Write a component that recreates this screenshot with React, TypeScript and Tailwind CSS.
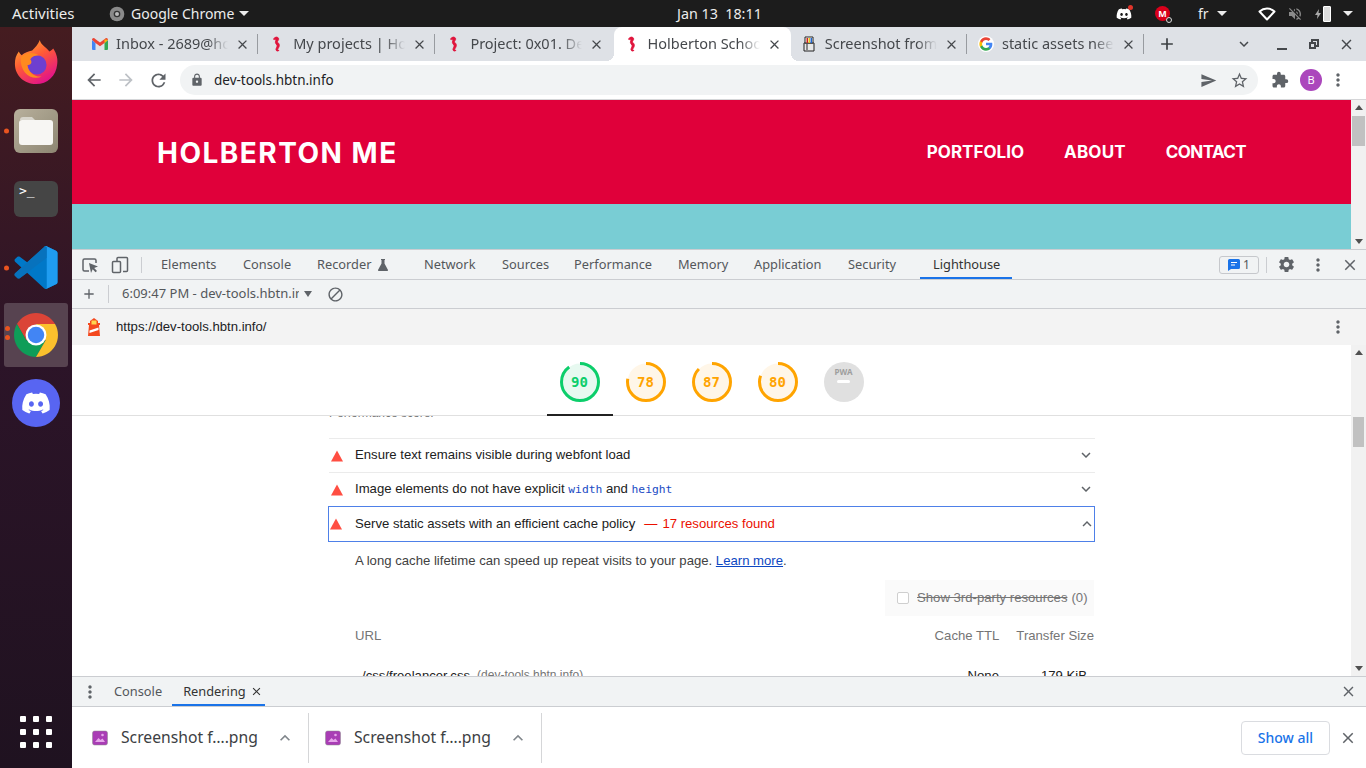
import { FaDiscord } from "react-icons/fa";
import {
  MdAdd,
  MdArrowBack,
  MdArrowForward,
  MdBlock,
  MdClose,
  MdExpandLess,
  MdExpandMore,
  MdExtension,
  MdLock,
  MdMoreVert,
  MdRefresh,
  MdSend,
  MdSettings,
  MdStarBorder,
  MdVolumeOff,
} from "react-icons/md";

function Seahorse() {
  return (
    <svg viewBox="0 0 16 16" className="h-4 w-4">
      <path
        d="M6 1.500c2-1 4 0 3.600 2-.2 1-1.200 1.400-1.200 2.300 0 .9 1.900 1.400 1.900 3.400 0 2.200-1.500 3.300-1.700 4.400-.1.800.9 1 1.400.4-.1 1.300-2.600 1.500-3-.1-.3-1.400 1.200-2.500 1.100-4.300-.1-1.200-1.600-1.700-1.700-3.200-.1-1 .6-1.700.6-2.500 0-.5-.6-.6-1.300-.3L4.400 3.100z"
        fill="#e0143c"
        stroke="#e0143c"
        strokeWidth="0.9"
      />
    </svg>
  );
}

function GmailIcon() {
  return (
    <svg viewBox="0 0 16 12" className="h-3 w-4">
      <path d="M0 2v9a1 1 0 0 0 1 1h2.500V5z" fill="#4285f4" />
      <path d="M16 2v9a1 1 0 0 1-1 1h-2.500V5z" fill="#34a853" />
      <path d="M0 1.800C0 .4 1.500-.4 2.600.4L8 4.500 13.400.4C14.500-.4 16 .4 16 1.800L12.500 5 8 8.300 3.500 5z" fill="#ea4335" />
      <path d="M12.500 1.500 16 1.800 12.500 5z" fill="#fbbc04" />
    </svg>
  );
}

function GoogleIcon() {
  return (
    <svg viewBox="0 0 48 48" className="h-4 w-4">
      <circle cx="24" cy="24" r="24" fill="#fff" />
      <path d="M43 24.500c0-1.400-.1-2.700-.4-4H24v7.600h10.700c-.5 2.500-1.900 4.500-4 5.900v5h6.400c3.700-3.500 5.900-8.600 5.900-14.500z" fill="#4285f4" />
      <path d="M24 44c5.400 0 9.900-1.800 13.100-4.900l-6.400-5c-1.800 1.200-4 1.900-6.700 1.900-5.200 0-9.600-3.500-11.200-8.200H6.200v5.100C9.500 39.500 16.200 44 24 44z" fill="#34a853" />
      <path d="M12.800 27.800c-.8-2.400-.8-5.100 0-7.600v-5.100H6.200c-2.800 5.500-2.800 12.300 0 17.800z" fill="#fbbc04" />
      <path d="M24 12c2.900 0 5.500 1 7.600 3l5.600-5.600C33.900 6.200 29.400 4 24 4 16.200 4 9.500 8.500 6.200 15.100l6.600 5.100C14.400 15.500 18.800 12 24 12z" fill="#ea4335" />
    </svg>
  );
}

function PaintIcon() {
  return (
    <svg viewBox="0 0 16 16" className="h-4 w-4">
      <path d="M3 7h10v8H3z" fill="#e8e8e8" stroke="#222" />
      <path d="M4 1h8v6H4z" fill="#fff" stroke="#222" />
      <path d="M5.500 2h1.500v5H5.500z" fill="#c22" />
      <path d="M7.500 2H9v5H7.500z" fill="#e5c31c" />
      <path d="M9.500 2H11v5H9.500z" fill="#26c" />
      <path d="M5 8h2v6H5z" fill="#888" />
    </svg>
  );
}

function Tab({
  icon,
  title,
  active,
  sep,
}: {
  icon: React.ReactNode;
  title: string;
  active?: boolean;
  sep?: boolean;
}) {
  return (
    <div
      className={
        active
          ? "relative flex h-[34px] w-[177.2px] items-center rounded-t-lg bg-white pl-[10px] before:absolute before:bottom-0 before:-left-2 before:h-2 before:w-2 before:bg-[radial-gradient(circle_at_0_0,transparent_8px,white_8px)] after:absolute after:-right-2 after:bottom-0 after:h-2 after:w-2 after:bg-[radial-gradient(circle_at_100%_0,transparent_8px,white_8px)]"
          : "relative flex h-[34px] w-[177.2px] items-center pl-[10px]"
      }
    >
      <span className="flex h-4 w-4 shrink-0 items-center justify-center">{icon}</span>
      <span className="ml-2 w-[112px] overflow-hidden whitespace-nowrap text-[14.500px] text-[#45484c] [mask-image:linear-gradient(to_right,black_82%,transparent)]">
        {title}
      </span>
      <MdClose className="ml-[7px] h-[15px] w-[15px] shrink-0 text-[#45484c]" />
      {sep && <span className="absolute top-[7px] right-[1px] h-5 w-px bg-[#989ba0]" />}
    </div>
  );
}

function Scrollbar({ thumb }: { thumb: string }) {
  return (
    <div className="flex w-[15px] shrink-0 flex-col items-center bg-[#f1f1f1]">
      <span className="mt-[5px] h-0 w-0 border-x-[4px] border-b-[5px] border-x-transparent border-b-[#505050]" />
      <span className={`h-[30px] bg-[#c1c1c1] ${thumb}`} />
      <span className="mt-auto mb-[5px] h-0 w-0 border-x-[4px] border-t-[5px] border-x-transparent border-t-[#505050]" />
    </div>
  );
}

function Gauge({ score, color, bg, dash }: { score: string; color: string; bg: string; dash: string }) {
  return (
    <div className="relative h-10 w-10">
      <svg viewBox="0 0 40 40" className="h-10 w-10 -rotate-90">
        <circle cx="20" cy="20" r="18.500" fill={bg} />
        <circle cx="20" cy="20" r="18.500" fill="none" stroke={color} strokeWidth="3" strokeDasharray={dash} />
      </svg>
      <span
        className="absolute inset-0 flex items-center justify-center font-['DejaVu_Sans_Mono',monospace] text-[14px] font-bold"
        style={{ color }}
      >
        {score}
      </span>
    </div>
  );
}

function Warn() {
  return (
    <svg viewBox="0 0 12 12" className="h-3 w-3 shrink-0">
      <path d="M6 .500 12 11.500H0z" fill="#ff4e42" />
    </svg>
  );
}

function AuditRow({ children }: { children: React.ReactNode }) {
  return (
    <div className="-mr-[1px] flex h-[34px] items-center border-t border-[#ebebeb] pl-[2px]">
      <Warn />
      <span className="ml-3 flex-1 pb-[2px]">{children}</span>
      <MdExpandMore className="-mt-[1px] h-[18px] w-[18px] text-[#5f6368]" />
    </div>
  );
}

function ShotIcon() {
  return (
    <svg viewBox="0 0 16 16" className="h-4 w-4 shrink-0">
      <rect x="0.500" y="1" width="15" height="14" rx="2" fill="#a93db5" stroke="#8b8b8b" strokeWidth="0.500" />
      <path d="M3 12l3.500-4 2 2 2-1.500L13 12z" fill="#e6a8ea" />
      <circle cx="10.500" cy="5" r="1.300" fill="#e6a8ea" />
    </svg>
  );
}

const devTabs = [
  { name: "Elements", w: "w-[82px]" },
  { name: "Console", w: "w-[74px]" },
  { name: "Recorder", w: "w-[107px]", flask: true },
  { name: "Network", w: "w-[78px]" },
  { name: "Sources", w: "w-[72px]" },
  { name: "Performance", w: "w-[104px]" },
  { name: "Memory", w: "w-[76px]" },
  { name: "Application", w: "w-[94px]" },
  { name: "Security", w: "w-[85px]" },
];

export default function App() {
  return (
    <div className="flex h-[768px] w-[1366px] flex-col overflow-hidden bg-white font-['Noto_Sans',sans-serif]">
      {/* gnome top bar */}
      <header className="flex h-[27px] shrink-0 items-center bg-[#1c1c1c] text-[14px] text-[#ececec]">
        <span className="ml-3 w-[97px] text-[15px]">Activities</span>
        <svg viewBox="0 0 48 48" className="h-4 w-4">
          <circle cx="24" cy="24" r="22" fill="#8a8a8a" />
          <circle cx="24" cy="24" r="10" fill="#333" />
          <circle cx="24" cy="24" r="6" fill="#bbb" />
        </svg>
        <span className="ml-[6px] w-[108px]">Google Chrome</span>
        <span className="h-0 w-0 border-x-[5px] border-t-[5px] border-x-transparent border-t-[#ececec]" />
        <span className="ml-[428px] w-[86px] whitespace-pre text-[14.300px]">Jan 13  18:11</span>
        <span className="relative ml-[353px] h-4 w-4">
          <FaDiscord className="h-4 w-4 text-white" />
          <span className="absolute -top-[1px] -right-[1px] h-[5px] w-[5px] rounded-full bg-[#e0352b]" />
        </span>
        <span className="relative ml-[23px] flex h-[15px] w-[15px] items-center justify-center rounded-full bg-[#d9001b] text-[9px] font-bold text-white">
          M
          <span className="absolute -right-[2px] -bottom-[2px] h-[6px] w-[6px] rounded-full border border-[#ddd] bg-[#222]" />
        </span>
        <span className="ml-[28px]">fr</span>
        <span className="ml-2 h-0 w-0 border-x-[5px] border-t-[5px] border-x-transparent border-t-[#ececec]" />
        <svg viewBox="0 0 18 14" className="ml-[31px] h-[14px] w-[18px]" fill="none" stroke="#fff" strokeWidth="2">
          <path d="M1.500 4.500C6 .5 12 .5 16.500 4.500L9 12.500z" strokeLinejoin="round" />
        </svg>
        <MdVolumeOff className="ml-[11px] h-4 w-4 text-[#8a8a8a]" />
        <svg viewBox="0 0 6 10" className="ml-[12px] h-[10px] w-[6px]">
          <path d="M4 0 0 6h2.500L2 10l4-6H3.500z" fill="#aaa" />
        </svg>
        <span className="ml-[2px] h-[16px] w-[8px] rounded-[1px] border border-white bg-[#ddd]" />
        <span className="ml-[12px] h-0 w-0 border-x-[5px] border-t-[5px] border-x-transparent border-t-[#ececec]" />
      </header>

      <div className="flex min-h-0 flex-1">
        {/* dock */}
        <aside className="flex w-[72px] shrink-0 flex-col items-center bg-[linear-gradient(#451c20,#2c1428_45%,#1f1220)]">
          <svg viewBox="0 0 48 48" className="mt-[12px] h-[46px] w-[46px]">
            <defs>
              <linearGradient id="fx" x1="0" y1="0" x2="0.6" y2="1">
                <stop offset="0" stopColor="#ffbd30" />
                <stop offset="0.5" stopColor="#ff5a36" />
                <stop offset="1" stopColor="#e31587" />
              </linearGradient>
            </defs>
            <path d="M28 1c1 5 6 7 10 12 2-1 3-2 4-3 4 6 5 12 4 17-1 11-10 20-22 20S2 38 2 26c0-5 1-9 4-13 1 2 2 3 3 4 3-3 7-4 11-5 3-3 6-6 8-11z" fill="url(#fx)" />
            <circle cx="25" cy="27" r="10" fill="#6e3fd0" />
            <path d="M8 19c5-5 12-6 19-2 -3 0-7 1-9 4 3 4 0 6-3 6 1 8 8 13 15 12-10 5-23-3-22-20z" fill="#ff8a1f" />
          </svg>
          <div className="relative mt-[24px] flex h-[44px] w-[44px] items-center justify-center rounded-md bg-[linear-gradient(135deg,#b8b09c,#8d8672)]">
            <span className="absolute top-1/2 -left-[10px] h-[5px] w-[5px] -translate-y-1/2 rounded-full bg-[#e95420]" />
            <svg viewBox="0 0 36 30" className="h-[30px] w-[36px]">
              <path d="M2 4a3 3 0 0 1 3-3h9l3 3z" fill="#d8d5cc" />
              <rect x="1" y="4" width="34" height="25" rx="3" fill="#f7f6f3" />
            </svg>
          </div>
          <div className="mt-[28px] flex h-[36px] w-[44px] items-start rounded-md bg-[#454545] pl-[5px] pt-[3px] font-['DejaVu_Sans_Mono',monospace] text-[13px] leading-[14px] text-white">
            &gt;_
          </div>
          <div className="relative mt-[29px] h-[43px] w-[44px]">
            <span className="absolute top-1/2 -left-[10px] h-[5px] w-[5px] -translate-y-1/2 rounded-full bg-[#e95420]" />
            <svg viewBox="0 0 100 100" className="h-[43px] w-[44px]">
              <path
                d="M70.900 99.300c1.600.6 3.400.6 5-.2l20.600-9.900c2.200-1 3.500-3.200 3.500-5.600V16.400c0-2.400-1.400-4.600-3.500-5.600L75.900.9c-2.100-1-4.600-.8-6.400.5-.3.2-.5.400-.7.700L29.400 38 12.200 25c-1.600-1.200-3.800-1.100-5.300.2l-5.500 5c-1.800 1.700-1.800 4.500 0 6.200L16.200 50 1.400 63.600c-1.800 1.700-1.800 4.500 0 6.200l5.500 5c1.500 1.300 3.700 1.400 5.300.2L29.400 62l39.400 36c.6.600 1.300 1 2.100 1.300zM75 27.300 45.100 50 75 72.700z"
                fill="#0078c8"
              />
              <path d="M75.900.9l20.600 9.900c2.200 1 3.500 3.200 3.500 5.600v67.200c0 2.400-1.400 4.600-3.500 5.600L75.900 99.100c-2.100 1-4.600.8-6.400-.5 2.300 2.300 5.500.6 5.500-2.600V4c0-3.200-3.200-4.900-5.500-2.600 1.800-1.300 4.300-1.500 6.400-.5z" fill="#1f9cf0" />
              <path d="M75 4v23.300L29.400 62 12.200 75c-1.600 1.200-3.800 1.100-5.300-.2l-5.500-5c-1.800-1.700-1.800-4.500 0-6.200L68.800 2.100C70.900 0 75 1 75 4z" fill="#0a6fb8" opacity="0.7" />
            </svg>
          </div>
          <div className="relative mt-[14px] flex h-[64px] w-[64px] items-center justify-center rounded-[3px] bg-[#574350]">
            <span className="absolute top-[23px] left-[1px] h-[5px] w-[5px] rounded-full bg-[#e95420]" />
            <span className="absolute top-[32px] left-[1px] h-[5px] w-[5px] rounded-full bg-[#e95420]" />
            <svg viewBox="4 4 40 40" className="h-[44px] w-[44px]">
              <path d="M6.700 14A20 20 0 0 1 41.300 14H24L15.300 29z" fill="#db4437" />
              <path d="M6.700 14A20 20 0 0 0 24 44L32.700 29H15.300z" fill="#0f9d58" />
              <path d="M41.300 14A20 20 0 0 1 24 44L32.700 29 24 14z" fill="#fbc02d" />
              <circle cx="24" cy="24" r="9.500" fill="#fff" />
              <circle cx="24" cy="24" r="7.500" fill="#4285f4" />
            </svg>
          </div>
          <div className="mt-[12px] flex h-12 w-12 items-center justify-center rounded-full bg-[#5865f2]">
            <FaDiscord className="h-[30px] w-[30px] text-white" />
          </div>
          <div className="mt-auto mb-[20px] grid grid-cols-3 gap-x-[7px] gap-y-[7px]">
            {Array.from({ length: 9 }).map((_, i) => (
              <span key={i} className="h-[6px] w-[6px] rounded-[1px] bg-white" />
            ))}
          </div>
        </aside>

        <main className="flex min-w-0 flex-1 flex-col">
          {/* tab strip */}
          <div className="flex h-[34px] shrink-0 items-center bg-[#dee1e6] pl-[10px]">
            <Tab icon={<GmailIcon />} title="Inbox - 2689@holbertonschool" sep />
            <Tab icon={<Seahorse />} title="My projects | Holberton" sep />
            <Tab icon={<Seahorse />} title="Project: 0x01. DevTools" />
            <Tab icon={<Seahorse />} title="Holberton School" active />
            <Tab icon={<PaintIcon />} title="Screenshot from 2022" sep />
            <Tab icon={<GoogleIcon />} title="static assets need" sep />
            <MdAdd className="ml-[12px] h-[20px] w-[20px] text-[#3c4043]" />
            <MdExpandMore className="ml-[58px] h-[18px] w-[18px] text-[#45484c]" />
            <span className="mt-[10px] ml-[24px] h-[2px] w-[10px] bg-[#45484c]" />
            <span className="relative ml-[22px] h-[10px] w-[10px]">
              <span className="absolute top-0 right-0 h-[8px] w-[8px] border-2 border-[#45484c]" />
              <span className="absolute bottom-0 left-0 h-[7px] w-[7px] border-2 border-[#45484c] bg-[#dee1e6]" />
            </span>
            <MdClose className="ml-[19px] h-[17px] w-[17px] text-[#45484c]" />
          </div>

          {/* toolbar */}
          <div className="flex h-[39px] shrink-0 items-center border-b border-[#d5d6d8] bg-white">
            <MdArrowBack className="ml-[12px] h-5 w-5 text-[#5f6368]" />
            <MdArrowForward className="ml-[12px] h-5 w-5 text-[#bdc1c6]" />
            <MdRefresh className="ml-[12px] h-[21px] w-[21px] text-[#5f6368]" />
            <div className="ml-[11px] flex h-[30px] w-[1078px] items-center rounded-full bg-[#f1f3f4]">
              <MdLock className="ml-[10px] h-[14px] w-[14px] text-[#5f6368]" />
              <span className="ml-[10px] text-[13.500px] text-[#202124]">dev-tools.hbtn.info</span>
              <MdSend className="ml-auto h-[17px] w-[17px] text-[#5f6368]" />
              <MdStarBorder className="mr-[9px] ml-[13px] h-[19px] w-[19px] text-[#5f6368]" />
            </div>
            <MdExtension className="ml-[13px] h-[18px] w-[18px] text-[#5f6368]" />
            <span className="ml-[11px] flex h-[22px] w-[22px] items-center justify-center rounded-full bg-[#ab47bc] text-[11px] text-white">
              B
            </span>
            <MdMoreVert className="ml-[6px] h-5 w-5 text-[#5f6368]" />
          </div>

          {/* page */}
          <div className="flex h-[149px] shrink-0">
            <div className="flex min-w-0 flex-1 flex-col">
              <div className="flex h-[104px] items-center bg-[#e0003a] pl-[85px] pr-[105px] pt-[2px] font-['Inter',sans-serif] font-bold text-white">
                <span className="text-[28px] tracking-[1.500px]">HOLBERTON ME</span>
                <span className="ml-auto text-[17px]">PORTFOLIO</span>
                <span className="ml-10 text-[17px] tracking-[0.2px]">ABOUT</span>
                <span className="ml-10 text-[17px] tracking-[-0.6px]">CONTACT</span>
              </div>
              <div className="flex-1 bg-[#79cdd4]" />
            </div>
            <Scrollbar thumb="mt-[6px] w-[13px]" />
          </div>

          {/* devtools tab bar */}
          <div className="flex h-[31px] shrink-0 items-center border-y border-[#cbcdd1] bg-[#f1f3f4] text-[12.800px] text-[#54575b]">
            <svg viewBox="0 0 18 18" className="ml-[9px] h-[18px] w-[18px]" fill="none">
              <path d="M8 15H3.500A1.500 1.500 0 0 1 2 13.500v-9A1.500 1.500 0 0 1 3.500 3h10A1.500 1.500 0 0 1 15 4.500V7" stroke="#5f6368" strokeWidth="1.500" />
              <path d="M8 7l9 3.500-3.800 1.400 2.800 3-1.500 1.400-2.800-3L10 17z" fill="#5f6368" />
            </svg>
            <svg viewBox="0 0 18 18" className="ml-[12px] h-[18px] w-[18px]" fill="none" stroke="#5f6368" strokeWidth="1.500">
              <path d="M6 5V2.500A1 1 0 0 1 7 1.500h8.500a1 1 0 0 1 1 1v12a1 1 0 0 1-1 1H12" />
              <rect x="1.500" y="5.500" width="8" height="11" rx="1" />
            </svg>
            <span className="ml-[12px] mr-[6px] h-[16px] w-px bg-[#cbcdd1]" />
            {devTabs.map((t) => (
              <div key={t.name} className={`flex h-full items-center pl-[13px] ${t.w}`}>
                {t.name}
                {t.flask && (
                  <svg viewBox="0 0 10 12" className="ml-[7px] h-3 w-[10px]">
                    <path d="M3 0h4v1H6.500v3.500L10 11a.8.8 0 0 1-.7 1H.7A.8.8 0 0 1 0 11l3.500-6.500V1H3z" fill="#5f6368" />
                  </svg>
                )}
              </div>
            ))}
            <div className="flex h-full w-[92px] items-center border-b-2 border-[#1a73e8] pl-[13px] pt-[2px] text-[#333]">Lighthouse</div>
            <div className="ml-[207px] flex h-[18px] w-[40px] items-center justify-center gap-[3px] rounded-[3px] border border-[#c6c8cc]">
              <svg viewBox="0 0 12 12" className="h-3 w-3">
                <path d="M1.500 0h9A1.500 1.500 0 0 1 12 1.500v7A1.500 1.500 0 0 1 10.500 10H3l-3 2V1.500A1.500 1.500 0 0 1 1.500 0z" fill="#1a73e8" />
                <path d="M3 3h6v1H3zM3 5.500h4v1H3z" fill="#fff" />
              </svg>
              <span className="text-[12px]">1</span>
            </div>
            <span className="ml-[7px] h-[16px] w-px bg-[#cbcdd1]" />
            <MdSettings className="ml-[10px] h-[19px] w-[19px] text-[#5f6368]" />
            <MdMoreVert className="ml-[12px] h-[20px] w-[20px] text-[#5f6368]" />
            <MdClose className="ml-[13px] h-[18px] w-[18px] text-[#5f6368]" />
          </div>

          {/* lighthouse toolbar */}
          <div className="flex h-[29px] shrink-0 items-center border-b border-[#cbcdd1] bg-[#f1f3f4] text-[13px] text-[#54575b]">
            <MdAdd className="ml-[9px] h-4 w-4 text-[#5f6368]" />
            <span className="ml-[11px] h-[18px] w-px bg-[#cbcdd1]" />
            <span className="ml-[13px] w-[177px] overflow-hidden whitespace-nowrap">6:09:47 PM - dev-tools.hbtn.info</span>
            <span className="ml-[5px] h-0 w-0 border-x-[4px] border-t-[6px] border-x-transparent border-t-[#5f6368]" />
            <MdBlock className="ml-[15px] h-[17px] w-[17px] text-[#5f6368]" />
          </div>

          {/* url row */}
          <div className="flex h-[36px] shrink-0 items-center bg-[#f3f3f3] font-['Liberation_Sans',sans-serif] text-[13.150px] text-[#202124]">
            <svg viewBox="0 0 14 18" className="ml-[15px] h-[18px] w-[14px]">
              <path d="M7 0l4 3v2H3V3z" fill="#f4481e" />
              <path d="M1 5h12v2h-1l1 11H1L2 7H1z" fill="#f4481e" />
              <rect x="4.500" y="2.500" width="5" height="4" fill="#ffd54f" />
              <path d="M2.500 12.500l9-3v2.500l-9 3z" fill="#fff" />
            </svg>
            <span className="ml-[15px]">https://dev-tools.hbtn.info/</span>
            <MdMoreVert className="ml-auto mr-[18px] h-5 w-5 text-[#5f6368]" />
          </div>

          {/* report */}
          <div className="flex min-h-0 flex-1">
            <div className="flex min-w-0 flex-1 flex-col">
              <div className="flex h-[71px] shrink-0 justify-center gap-[26px] border-b border-[#e0e0e0] pt-[17px]">
                <div className="relative">
                  <Gauge score="90" color="#0cce6b" bg="#e7f9f0" dash="104 116" />
                  <span className="absolute top-[52px] -left-[13px] h-[2px] w-[66px] bg-[#212121]" />
                </div>
                <Gauge score="78" color="#ffa400" bg="#fff6e8" dash="90 116" />
                <Gauge score="87" color="#ffa400" bg="#fff6e8" dash="101 116" />
                <Gauge score="80" color="#ffa400" bg="#fff6e8" dash="93 116" />
                <div className="relative flex h-10 w-10 flex-col items-center rounded-full bg-[#e0e0e0]">
                  <span className="mt-[5px] text-[8px] font-bold leading-[10px] text-[#9e9e9e]">PWA</span>
                  <span className="mt-[3px] h-[3px] w-[13px] rounded-full bg-white" />
                </div>
              </div>
              <div className="min-h-0 flex-1 overflow-hidden font-['Liberation_Sans',sans-serif] text-[13.150px] text-[#212121]">
                <div className="mx-[257px] -mt-[11px]">
                  <div className="h-[33px] text-[12px] leading-[16px] text-[#757575]">Performance score:</div>
                  <AuditRow>Ensure text remains visible during webfont load</AuditRow>
                  <AuditRow>
                    Image elements do not have explicit{" "}
                    <code className="font-['DejaVu_Sans_Mono',monospace] text-[11.300px] text-[#1a4bc4]">width</code> and{" "}
                    <code className="font-['DejaVu_Sans_Mono',monospace] text-[11.300px] text-[#1a4bc4]">height</code>
                  </AuditRow>
                  <div className="-mx-px flex h-[36px] items-center border border-[#4e80e8] pl-[1px]">
                    <Warn />
                    <span className="ml-[13px]">Serve static assets with an efficient cache policy</span>
                    <span className="ml-[9px] text-[#eb0f00]">—</span>
                    <span className="ml-[5px] text-[#eb0f00]">17 resources found</span>
                    <MdExpandLess className="-mr-[2px] ml-auto h-[18px] w-[18px] text-[#5f6368]" />
                  </div>
                  <p className="mt-[11px] ml-[26px] leading-[16px] text-[#414141]">
                    A long cache lifetime can speed up repeat visits to your page.{" "}
                    <span className="text-[#0d47c2] underline">Learn more</span>.
                  </p>
                  <div className="mt-[11px] ml-auto flex h-[36px] w-[209px] items-center bg-[#fafafa] pl-[12px] pb-[1px] pt-[1px] text-[#757575]">
                    <span className="h-3 w-3 rounded-[2px] border border-[#cfcfcf] bg-white" />
                    <span className="ml-[8px] line-through">Show 3rd-party resources</span>
                    <span className="ml-1">(0)</span>
                  </div>
                  <div className="mt-[10px] flex text-[#757575]">
                    <span className="ml-[26px]">URL</span>
                    <span className="ml-auto">Cache TTL</span>
                    <span className="ml-[17px]">Transfer Size</span>
                  </div>
                  <div className="mt-[20px] flex">
                    <span className="ml-[33px]">/css/freelancer.css</span>
                    <span className="ml-[7px] text-[12px] text-[#757575]">(dev-tools.hbtn.info)</span>
                    <span className="ml-auto">None</span>
                    <span className="mr-[7px] ml-[42px]">179 KiB</span>
                  </div>
                </div>
              </div>
            </div>
            <Scrollbar thumb="mt-[62px] w-[11px]" />
          </div>

          {/* drawer tabs */}
          <div className="flex h-[31px] shrink-0 items-center border-y border-[#cbcdd1] bg-[#f1f3f4] text-[12.800px] text-[#54575b]">
            <MdMoreVert className="ml-[8px] h-5 w-5 text-[#5f6368]" />
            <span className="ml-[14px]">Console</span>
            <div className="relative ml-[10px] flex h-full w-[93px] items-center border-b-2 border-[#1a73e8] pl-[11px] pt-[2px] text-[#333]">
              Rendering
              <MdClose className="absolute right-[2px] h-[13px] w-[13px] text-[#333]" />
            </div>
            <MdClose className="ml-auto mr-[9px] h-[17px] w-[17px] text-[#5f6368]" />
          </div>

          {/* download shelf */}
          <div className="flex h-[61px] shrink-0 items-center bg-white text-[15.700px] text-[#3c4043]">
            <div className="flex h-[50px] w-[237px] items-center border-r border-[#d5d6d8] pl-[20px]">
              <ShotIcon />
              <span className="ml-[13px] pt-[1px]">Screenshot f….png</span>
              <MdExpandLess className="ml-auto mr-[13px] h-5 w-5 text-[#80868b]" />
            </div>
            <div className="flex h-[50px] w-[233px] items-center border-r border-[#d5d6d8] pl-[16px]">
              <ShotIcon />
              <span className="ml-[13px] pt-[1px]">Screenshot f….png</span>
              <MdExpandLess className="ml-auto mr-[13px] h-5 w-5 text-[#80868b]" />
            </div>
            <button className="ml-auto flex h-[34px] w-[89px] items-center justify-center rounded border border-[#dadce0] text-[14px] font-medium text-[#1a73e8]">
              Show all
            </button>
            <MdClose className="mr-[9px] ml-[9px] h-[18px] w-[18px] text-[#5f6368]" />
          </div>
        </main>
      </div>
    </div>
  );
}
